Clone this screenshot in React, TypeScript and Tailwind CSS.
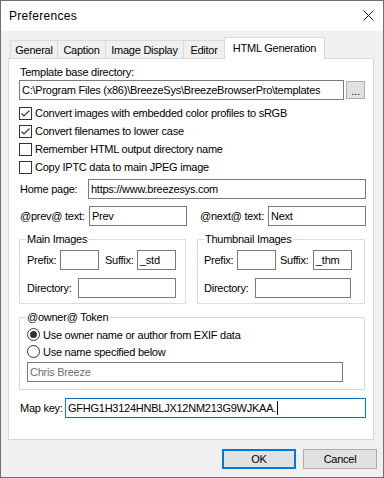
import React from 'react';

const txt = "font-['Liberation_Sans',Arial,sans-serif] text-[11px] tracking-[-0.25px] text-black leading-[16px]";

type BoxProps = { value?: string; className: string; muted?: boolean; focus?: boolean };

const Box: React.FC<BoxProps> = ({ value = '', className, muted = false, focus = false }) => (
  <div
    className={`h-[20px] shrink-0 flex items-center bg-white pl-[2px] border whitespace-nowrap overflow-hidden ${
      focus ? 'border-[#0078d7]' : 'border-[#7a7a7a]'
    } ${muted ? 'text-[#6d6d6d]' : 'text-black'} ${className}`}
  >
    <span>{value}</span>
    {focus && <span className="ml-[1px] w-px h-[14px] bg-black" />}
  </div>
);

const Check: React.FC<{ checked?: boolean; label: string }> = ({ checked = false, label }) => (
  <div className="h-[18px] flex items-center">
    <span className="w-[13px] h-[13px] shrink-0 border border-[#333333] bg-white flex items-center justify-center">
      {checked && (
        <svg width="11" height="11" viewBox="0 0 11 11">
          <path d="M1.5 5.5 L4 8 L9.5 2.5" stroke="#333333" strokeWidth="1.1" fill="none" />
        </svg>
      )}
    </span>
    <span className="ml-[3px]">{label}</span>
  </div>
);

const Radio: React.FC<{ checked?: boolean; label: string }> = ({ checked = false, label }) => (
  <div className="h-[17px] flex items-center">
    <span className="w-[13px] h-[13px] shrink-0 rounded-full border border-[#333333] bg-white flex items-center justify-center">
      {checked && <span className="w-[7px] h-[7px] rounded-full bg-[#333333]" />}
    </span>
    <span className="ml-[3px]">{label}</span>
  </div>
);

const Group: React.FC<{ title: string; className: string; children: React.ReactNode }> = ({ title, className, children }) => (
  <div className={`relative border border-[#dcdcdc] ${className}`}>
    <span className="absolute left-[6px] -top-[9px] bg-white px-[1px]">{title}</span>
    {children}
  </div>
);

const Tab: React.FC<{ label: string; className: string; active?: boolean }> = ({ label, className, active = false }) =>
  active ? (
    <div className={`relative z-10 -ml-px -mb-px h-[22px] bg-white border border-b-0 border-[#d9d9d9] flex items-center justify-center pb-[2px] ${className}`}>
      {label}
    </div>
  ) : (
    <div className={`-ml-px first:ml-0 h-[18px] bg-[#f0f0f0] border border-b-0 border-[#d9d9d9] flex items-center justify-center ${className}`}>
      {label}
    </div>
  );

const Button: React.FC<{ label: string; primary?: boolean }> = ({ label, primary = false }) => (
  <div
    className={`w-[74px] h-[20px] bg-[#e1e1e1] flex items-center justify-center ${
      primary ? 'border-2 border-[#0078d7]' : 'border border-[#adadad]'
    }`}
  >
    {label}
  </div>
);

const App: React.FC = () => {
  return (
    <div className={`w-[384px] h-[478px] flex flex-col border border-[#707070] bg-[#f0f0f0] ${txt}`}>
      {/* title bar */}
      <div className="h-[30px] shrink-0 bg-white flex items-center justify-between pl-[8px] pr-[9px]">
        <span className="text-[12px] tracking-[0.3px] pb-[1px]">Preferences</span>
        <svg width="11" height="11" viewBox="0 0 11 11" className="mb-[1px]">
          <path d="M0.5 0.5 L10.5 10.5 M10.5 0.5 L0.5 10.5" stroke="#1a1a1a" strokeWidth="1" />
        </svg>
      </div>

      {/* tabs */}
      <div className="h-[21px] mt-[6px] shrink-0 flex items-end pl-[9px]">
        <Tab label="General" className="w-[48px]" />
        <Tab label="Caption" className="w-[49px]" />
        <Tab label="Image Display" className="w-[79px]" />
        <Tab label="Editor" className="w-[42px]" />
        <Tab label="HTML Generation" className="w-[101px]" active />
      </div>

      {/* page */}
      <div className="ml-[7px] w-[366px] bg-white border border-[#d9d9d9] flex flex-col pl-[10px] pr-[7px] pt-[5px] pb-[21px]">
        <div className="h-[16px] pl-[1px]">Template base directory:</div>
        <div className="flex items-center gap-[2px]">
          <Box value="C:\Program Files (x86)\BreezeSys\BreezeBrowserPro\templates" className="w-[325px]" />
          <div className="w-[19px] h-[18px] bg-[#e1e1e1] border border-[#adadad] flex items-end justify-center pb-[1px] leading-[12px]">
            ...
          </div>
        </div>

        <div className="mt-[4px] flex flex-col">
          <Check checked label="Convert images with embedded color profiles to sRGB" />
          <Check checked label="Convert filenames to lower case" />
          <Check label="Remember HTML output directory name" />
          <Check label="Copy IPTC data to main JPEG image" />
        </div>

        <div className="mt-[3px] flex items-center">
          <span className="w-[69px] pl-[1px]">Home page:</span>
          <Box value="https://www.breezesys.com" className="w-[278px]" />
        </div>

        <div className="mt-[7px] flex items-center">
          <span className="w-[70px] pl-[1px]">@prev@ text:</span>
          <Box value="Prev" className="w-[98px]" />
          <span className="ml-[12px] w-[69px] pl-[1px]">@next@ text:</span>
          <Box value="Next" className="w-[98px]" />
        </div>

        <div className="mt-[13px] flex gap-[11px]">
          <Group title="Main Images" className="w-[167px] h-[65px] pt-[10px] pl-[7px] flex flex-col gap-[8px]">
            <div className="flex items-center">
              <span className="w-[33px]">Prefix:</span>
              <Box className="w-[39px]" />
              <span className="ml-[6px] w-[32px]">Suffix:</span>
              <Box value="_std" className="w-[39px]" />
            </div>
            <div className="flex items-center">
              <span className="w-[51px]">Directory:</span>
              <Box className="w-[98px]" />
            </div>
          </Group>
          <Group title="Thumbnail Images" className="w-[168px] h-[65px] pt-[10px] pl-[6px] flex flex-col gap-[8px]">
            <div className="flex items-center">
              <span className="w-[33px]">Prefix:</span>
              <Box className="w-[39px]" />
              <span className="ml-[4px] w-[33px]">Suffix:</span>
              <Box value="_thm" className="w-[39px]" />
            </div>
            <div className="flex items-center">
              <span className="w-[51px]">Directory:</span>
              <Box className="w-[96px]" />
            </div>
          </Group>
        </div>

        <Group title="@owner@ Token" className="mt-[13px] w-[346px] h-[73px] pt-[8px] pl-[7px] flex flex-col">
          <Radio checked label="Use owner name or author from EXIF data" />
          <Radio label="Use name specified below" />
          <Box value="Chris Breeze" muted className="mt-[2px] w-[316px]" />
        </Group>

        <div className="mt-[8px] flex items-center">
          <span className="w-[46px] pl-[1px]">Map key:</span>
          <Box value="GFHG1H3124HNBLJX12NM213G9WJKAA." focus className="w-[301px]" />
        </div>
      </div>

      {/* buttons */}
      <div className="mt-[9px] flex justify-end gap-[7px] pr-[6px]">
        <Button label="OK" primary />
        <Button label="Cancel" />
      </div>
    </div>
  );
};

export default App;
